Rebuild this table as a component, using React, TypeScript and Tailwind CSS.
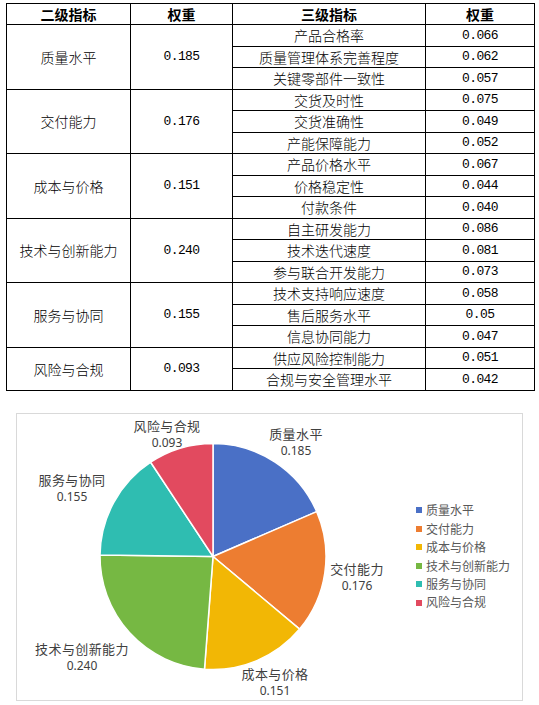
import React from "react";

const groups = [
  { name: "质量水平", weight: "0.185", items: [["产品合格率", "0.066"], ["质量管理体系完善程度", "0.062"], ["关键零部件一致性", "0.057"]] },
  { name: "交付能力", weight: "0.176", items: [["交货及时性", "0.075"], ["交货准确性", "0.049"], ["产能保障能力", "0.052"]] },
  { name: "成本与价格", weight: "0.151", items: [["产品价格水平", "0.067"], ["价格稳定性", "0.044"], ["付款条件", "0.040"]] },
  { name: "技术与创新能力", weight: "0.240", items: [["自主研发能力", "0.086"], ["技术迭代速度", "0.081"], ["参与联合开发能力", "0.073"]] },
  { name: "服务与协同", weight: "0.155", items: [["技术支持响应速度", "0.058"], ["售后服务水平", "0.05"], ["信息协同能力", "0.047"]] },
  { name: "风险与合规", weight: "0.093", items: [["供应风险控制能力", "0.051"], ["合规与安全管理水平", "0.042"]] },
];

// slice colours + label spots (svg coords)
const slices = [
  { name: "质量水平", value: 0.185, color: "#4a70c6", lx: 279, ly: 19 },
  { name: "交付能力", value: 0.176, color: "#ed7d31", lx: 340, ly: 154 },
  { name: "成本与价格", value: 0.151, color: "#f2b705", lx: 258, ly: 259 },
  { name: "技术与创新能力", value: 0.24, color: "#76b843", lx: 65, ly: 234 },
  { name: "服务与协同", value: 0.155, color: "#2fbdb1", lx: 55, ly: 65 },
  { name: "风险与合规", value: 0.093, color: "#e24a5f", lx: 150, ly: 11 },
];

const cjk = "font-['Noto_Sans_CJK_SC',sans-serif]";
const mono = "font-['Liberation_Mono',monospace] text-[13px] tracking-[-0.6px]";

const PieChart: React.FC = () => {
  const cx = 196;
  const cy = 142.5;
  const r = 113;
  let acc = 0;

  const paths = slices.map((s) => {
    const a0 = acc * 2 * Math.PI - Math.PI / 2;
    acc += s.value;
    const a1 = acc * 2 * Math.PI - Math.PI / 2;
    const x0 = cx + r * Math.cos(a0);
    const y0 = cy + r * Math.sin(a0);
    const x1 = cx + r * Math.cos(a1);
    const y1 = cy + r * Math.sin(a1);
    const large = a1 - a0 > Math.PI ? 1 : 0;
    const d = `M ${cx} ${cy} L ${x0} ${y0} A ${r} ${r} 0 ${large} 1 ${x1} ${y1} Z`;
    return <path key={s.name} d={d} fill={s.color} stroke="#ffffff" strokeWidth={1.5} strokeLinejoin="round" />;
  });

  return (
    <svg width={399} height={286} className="shrink-0">
      {paths}
      {slices.map((s) => (
        <g key={s.name} fill="#404040" textAnchor="middle" dominantBaseline="central">
          <text x={s.lx} y={s.ly} fontSize={13} fontFamily="'Noto Sans CJK SC', sans-serif" letterSpacing={0.4}>
            {s.name}
          </text>
          <text x={s.lx} y={s.ly + 17} fontSize={12} fontFamily="'Noto Sans', sans-serif">
            {s.value.toFixed(3)}
          </text>
        </g>
      ))}
    </svg>
  );
};

const App: React.FC = () => {
  return (
    <div className={`w-[539px] h-[705px] bg-white overflow-hidden ${cjk}`}>
      <div className="pt-[3px] pl-[6px]">
        <table className="w-[528px] table-fixed border-collapse border border-black text-[14px] text-black">
          <colgroup>
            <col className="w-[124px]" />
            <col className="w-[102px]" />
            <col className="w-[193px]" />
            <col className="w-[109px]" />
          </colgroup>
          <thead>
            <tr className="h-[21px]">
              <th className="border border-black p-0 font-bold leading-none">二级指标</th>
              <th className="border border-black p-0 font-bold leading-none">权重</th>
              <th className="border border-black p-0 font-bold leading-none">三级指标</th>
              <th className="border border-black p-0 font-bold leading-none">权重</th>
            </tr>
          </thead>
          <tbody className="font-light">
            {groups.map((g) =>
              g.items.map((it, i) => (
                <tr key={g.name + i} className="h-[21.5px]">
                  {i === 0 && (
                    <>
                      <td rowSpan={g.items.length} className="border border-black p-0 text-center align-middle leading-none">
                        {g.name}
                      </td>
                      <td rowSpan={g.items.length} className={`border border-black p-0 text-center align-middle leading-none ${mono}`}>
                        {g.weight}
                      </td>
                    </>
                  )}
                  <td className="border border-black p-0 text-center align-middle leading-none whitespace-nowrap">{it[0]}</td>
                  <td className={`border border-black p-0 text-center align-middle leading-none ${mono}`}>{it[1]}</td>
                </tr>
              ))
            )}
          </tbody>
        </table>
      </div>

      <div className="ml-[16px] mt-[22px] w-[507px] h-[288px] border border-[#d9d9d9] flex items-center">
        <PieChart />
        <div className="flex flex-col text-[12px] leading-[18.4px] text-[#595959]">
          {slices.map((s) => (
            <div key={s.name} className="flex items-center gap-[4px]">
              <span className="w-[6px] h-[6px]" style={{ backgroundColor: s.color }} />
              <span>{s.name}</span>
            </div>
          ))}
        </div>
      </div>
    </div>
  );
};

export default App;
